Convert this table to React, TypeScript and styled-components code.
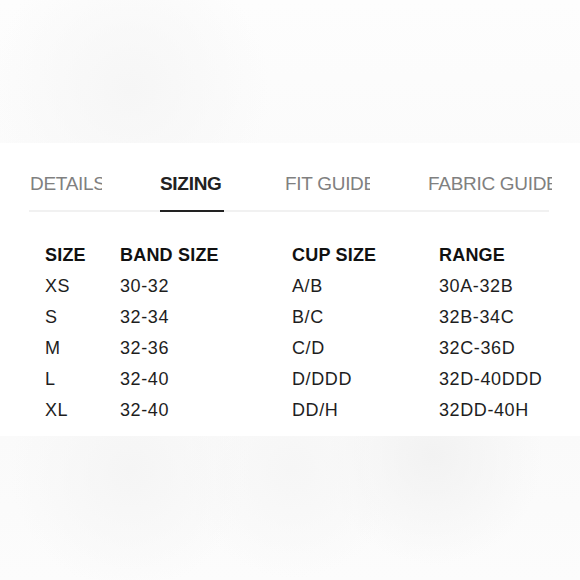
import styled, { createGlobalStyle } from "styled-components";

const tabs = [
  { label: "DETAILS", slot: 130, clip: 72 },
  { label: "SIZING", slot: 125, clip: 64, active: true },
  { label: "FIT GUIDE", slot: 143, clip: 85 },
  { label: "FABRIC GUIDE", slot: 124, clip: 124 },
];

const header = ["SIZE", "BAND SIZE", "CUP SIZE", "RANGE"];

const rows = [
  ["XS", "30-32", "A/B", "30A-32B"],
  ["S", "32-34", "B/C", "32B-34C"],
  ["M", "32-36", "C/D", "32C-36D"],
  ["L", "32-40", "D/DDD", "32D-40DDD"],
  ["XL", "32-40", "DD/H", "32DD-40H"],
];

export default function App() {
  return (
    <>
      <GlobalStyle />
      <Page>
        <Backdrop $h={143} />
        <Panel>
          <TabBar>
            {tabs.map((t) => (
              <Tab key={t.label} $w={t.slot}>
                <TabLabel $w={t.clip} $active={!!t.active}>
                  {t.label}
                </TabLabel>
              </Tab>
            ))}
          </TabBar>
          <SizeTable>
            {header.map((h) => (
              <HeadCell key={h}>{h}</HeadCell>
            ))}
            {rows.map((r) =>
              r.map((c, i) => <Cell key={r[0] + i}>{c}</Cell>)
            )}
          </SizeTable>
        </Panel>
        <Backdrop $h={144} />
      </Page>
    </>
  );
}

const GlobalStyle = createGlobalStyle`
  html, body {
    margin: 0;
    padding: 0;
  }

  body {
    background: #fafafa;
    font-family: "Liberation Sans", Arial, sans-serif;
  }
`;

const Page = styled.div`
  display: flex;
  flex-direction: column;

  width: 580px;
  height: 580px;

  overflow: hidden;

  background:
    radial-gradient(circle at 130px 90px, #f6f6f6 0, rgba(250, 250, 250, 0) 140px),
    radial-gradient(circle at 130px 470px, #f5f5f5 0, rgba(250, 250, 250, 0) 120px),
    radial-gradient(circle at 292px 468px, #f6f6f6 0, rgba(250, 250, 250, 0) 110px),
    radial-gradient(circle at 433px 455px, #f2f2f2 0, rgba(250, 250, 250, 0) 110px),
    linear-gradient(#fdfdfd, #fafafa 40%, #fafafa 75%, #fcfcfc);
`;

const Backdrop = styled.div<{ $h: number }>`
  flex: none;
  height: ${(p) => p.$h}px;
`;

const Panel = styled.div`
  flex: none;
  display: flex;
  flex-direction: column;

  padding: 29px 0 10px;

  background-color: #ffffff;
`;

const TabBar = styled.div`
  display: flex;
  flex-direction: row;

  margin: 0 31px 0 29px;
  padding-left: 1px;

  border-bottom: 2px solid #f1f1f1;
`;

const Tab = styled.div<{ $w: number }>`
  flex: none;
  width: ${(p) => p.$w}px;
`;

const TabLabel = styled.div<{ $w: number; $active: boolean }>`
  width: ${(p) => p.$w}px;
  height: 24px;

  padding-bottom: 14px;
  margin-bottom: -2px;

  overflow: hidden;
  white-space: nowrap;

  font-size: 19px;
  line-height: 24px;
  letter-spacing: -0.3px;
  font-weight: ${(p) => (p.$active ? 700 : 400)};
  color: ${(p) => (p.$active ? "#222222" : "#808080")};

  border-bottom: 2px solid ${(p) => (p.$active ? "#222222" : "transparent")};
`;

const SizeTable = styled.div`
  display: grid;
  grid-template-columns: 75px 172px 147px auto;
  grid-auto-rows: 31px;

  margin-top: 28px;
  padding-left: 45px;
`;

const HeadCell = styled.div`
  font-size: 18px;
  line-height: 31px;
  font-weight: 700;
  letter-spacing: 0.2px;
  color: #111111;
`;

const Cell = styled.div`
  font-size: 18px;
  line-height: 31px;
  letter-spacing: 0.6px;
  color: #1e1e1e;
`;
